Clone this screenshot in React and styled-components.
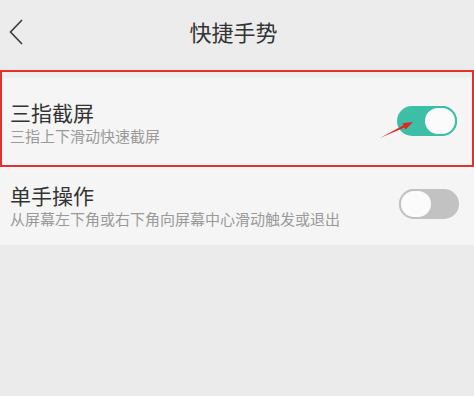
import React from "react";
import styled, { createGlobalStyle } from "styled-components";

const GlobalStyle = createGlobalStyle`
  html, body {
    margin: 0;
    padding: 0;
    background: #ebebeb;
    font-family: "Noto Sans CJK SC", "Noto Sans", sans-serif;
  }
`;

const settings = [
  { title: "三指截屏", desc: "三指上下滑动快速截屏", on: true, marked: true },
  { title: "单手操作", desc: "从屏幕左下角或右下角向屏幕中心滑动触发或退出", on: false },
];

const App = () => {
  return (
    <Page>
      <GlobalStyle />
      <Header>
        <Back>
          <svg width="14" height="26" viewBox="0 0 14 26">
            <path d="M13 1 L1.5 13 L13 25" fill="none" stroke="#3a3a3a" strokeWidth="1.6" />
          </svg>
        </Back>
        <Title>快捷手势</Title>
      </Header>
      <List>
        {settings.map((s) => (
          <Item key={s.title} $marked={s.marked}>
            <Texts>
              <ItemTitle>{s.title}</ItemTitle>
              <ItemDesc>{s.desc}</ItemDesc>
            </Texts>
            <Toggle $on={s.on}>
              <Knob $on={s.on} />
            </Toggle>
            {s.marked && (
              <Arrow width="44" height="34" viewBox="0 0 44 34">
                <path d="M5 28 L28.5 15.3 L27.5 13.3 L38 12 L30.5 19.5 L29.5 17.5 Z" fill="#e2261f" />
              </Arrow>
            )}
          </Item>
        ))}
      </List>
    </Page>
  );
};

export default App;

const Page = styled.div`
  width: 474px;
  height: 396px;
  background: #ebebeb;
  overflow: hidden;
`;

const Header = styled.div`
  position: relative;
  height: 62px;
  display: flex;
  align-items: center;
  justify-content: center;
  background: #ececec;
`;

const Back = styled.div`
  position: absolute;
  left: 9px;
  top: 19px;
`;

const Title = styled.div`
  font-size: 22px;
  color: #333;
  margin-right: 7px;
`;

const List = styled.div`
  margin-top: 8px;
  display: flex;
  flex-direction: column;
`;

const Item = styled.div`
  position: relative;
  display: flex;
  align-items: flex-start;
  justify-content: space-between;
  background: #f5f5f5;
  padding: ${(p) => (p.$marked ? "27px 15px 18px 8px" : "15px 15px 15px 10px")};
  border: ${(p) => (p.$marked ? "2px solid #e2302e" : "none")};
  box-shadow: ${(p) => (p.$marked ? "inset 0 6px 0 #eeeeee" : "none")};
`;

const Texts = styled.div`
  display: flex;
  flex-direction: column;
`;

const ItemTitle = styled.div`
  font-size: 21px;
  line-height: 26px;
  color: #333;
`;

const ItemDesc = styled.div`
  font-size: 15px;
  line-height: 22px;
  color: #9a9a9a;
`;

const Toggle = styled.div`
  margin-top: 7px;
  width: 60px;
  height: 30px;
  box-sizing: border-box;
  border-radius: 15px;
  background: ${(p) => (p.$on ? "#3cbfa6" : "#c2c2c2")};
  display: flex;
  justify-content: ${(p) => (p.$on ? "flex-end" : "flex-start")};
`;

const Knob = styled.div`
  width: 34px;
  height: 30px;
  box-sizing: border-box;
  border-radius: 15px;
  background: #fbfbfb;
  border: 2px solid ${(p) => (p.$on ? "#3cbfa6" : "#c2c2c2")};
`;

const Arrow = styled.svg`
  position: absolute;
  left: 373px;
  top: 38px;
`;
